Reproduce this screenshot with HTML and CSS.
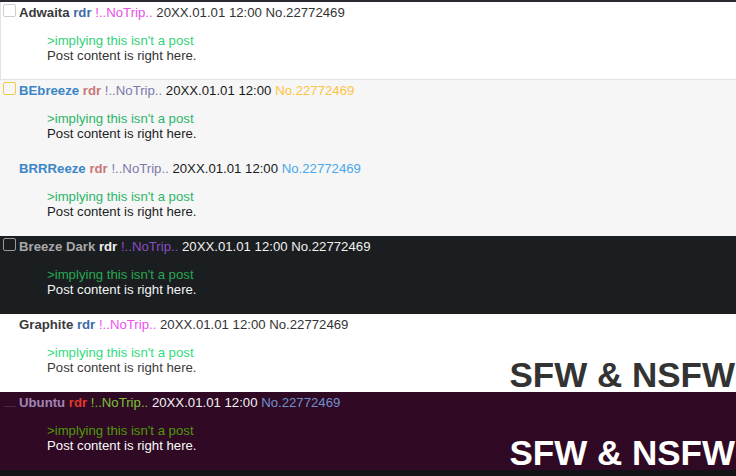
FILE: index.html
```html
<!DOCTYPE html>
<html>
<head>
<meta charset="utf-8">
<link rel="stylesheet" href="styles.css">
</head>
<body>
<div class="top-strip"></div>

<div class="theme adwaita">
  <div class="post">
    <div class="post-info"><span class="cb"></span><span class="name">Adwaita</span> <span class="tripname">rdr</span> <span class="trip">!..NoTrip..</span> <span class="date">20XX.01.01 12:00</span> <span class="num">No.22772469</span></div>
    <blockquote><span class="quote">&gt;implying this isn't a post</span><br>Post content is right here.</blockquote>
  </div>
</div>

<div class="theme bebreeze">
  <div class="post">
    <div class="post-info"><span class="cb"></span><span class="name">BEbreeze</span> <span class="tripname">rdr</span> <span class="trip">!..NoTrip..</span> <span class="date">20XX.01.01 12:00</span> <span class="num">No.22772469</span></div>
    <blockquote><span class="quote">&gt;implying this isn't a post</span><br>Post content is right here.</blockquote>
  </div>
</div>

<div class="theme brrreeze">
  <div class="post">
    <div class="post-info"><span class="cb hidden"></span><span class="name">BRRReeze</span> <span class="tripname">rdr</span> <span class="trip">!..NoTrip..</span> <span class="date">20XX.01.01 12:00</span> <span class="num">No.22772469</span></div>
    <blockquote><span class="quote">&gt;implying this isn't a post</span><br>Post content is right here.</blockquote>
  </div>
</div>

<div class="theme breezedark">
  <div class="post">
    <div class="post-info"><span class="cb"></span><span class="name">Breeze Dark</span> <span class="tripname">rdr</span> <span class="trip">!..NoTrip..</span> <span class="date">20XX.01.01 12:00</span> <span class="num">No.22772469</span></div>
    <blockquote><span class="quote">&gt;implying this isn't a post</span><br>Post content is right here.</blockquote>
  </div>
</div>

<div class="theme graphite">
  <div class="post">
    <div class="post-info"><span class="cb hidden"></span><span class="name">Graphite</span> <span class="tripname">rdr</span> <span class="trip">!..NoTrip..</span> <span class="date">20XX.01.01 12:00</span> <span class="num">No.22772469</span></div>
    <blockquote><span class="quote">&gt;implying this isn't a post</span><br>Post content is right here.</blockquote>
    <div class="badge">SFW &amp; NSFW</div>
  </div>
</div>

<div class="theme ubuntu">
  <div class="post">
    <div class="post-info"><span class="cb"></span><span class="name">Ubuntu</span> <span class="tripname">rdr</span> <span class="trip">!..NoTrip..</span> <span class="date">20XX.01.01 12:00</span> <span class="num">No.22772469</span></div>
    <blockquote><span class="quote">&gt;implying this isn't a post</span><br>Post content is right here.</blockquote>
    <div class="badge">SFW &amp; NSFW</div>
  </div>
</div>
</body>
</html>
```

FILE: styles.css
```css
html, body {
  margin: 0;
  padding: 0;
}
body {
  background: #101417;
  font-family: "Liberation Sans", Arial, sans-serif;
  font-size: 13.2px;
  line-height: 15px;
}
.top-strip {
  height: 2px;
  background: #2a2a33;
}
.post {
  position: relative;
  height: 78px;
  box-sizing: border-box;
  padding: 2px 0 0 0;
}
.post-info {
  padding-left: 3px;
  white-space: nowrap;
}
.cb {
  display: inline-block;
  width: 13px;
  height: 13px;
  box-sizing: border-box;
  border: 1px solid #cfcfcf;
  border-radius: 2px;
  background: #fff;
  margin-right: 3px;
  vertical-align: baseline;
}
.cb.hidden {
  visibility: hidden;
}
.name, .tripname {
  font-weight: bold;
}
blockquote {
  margin: 13px 0 0 47px;
}
.badge {
  position: absolute;
  right: 1px;
  bottom: 0;
  font-size: 35px;
  line-height: 35px;
  font-weight: bold;
  white-space: nowrap;
}

/* Adwaita */
.adwaita {
  background: #fff;
}
.adwaita .post {
  box-shadow: inset 1px 0 #e3e3e3, inset 0 -1px #e3e3e3;
}
.adwaita .name { color: #3a3a3a; }
.adwaita .tripname { color: #3d6aa8; }
.adwaita .trip { color: #e84fe8; }
.adwaita .date, .adwaita .num { color: #333; }
.adwaita .quote { color: #33d17a; }
.adwaita blockquote { color: #333; }
.adwaita .cb { border-color: #cdcdcd; }

/* BEbreeze */
.bebreeze, .brrreeze {
  background: #f6f6f6;
}
.bebreeze .name, .brrreeze .name { color: #3b86c6; }
.bebreeze .tripname, .brrreeze .tripname { color: #c87878; }
.bebreeze .trip, .brrreeze .trip { color: #7a7aaa; }
.bebreeze .date, .brrreeze .date { color: #181a1b; }
.bebreeze .num { color: #fdc443; }
.brrreeze .num { color: #4aa8e8; }
.bebreeze .quote, .brrreeze .quote { color: #2bb56a; }
.bebreeze blockquote, .brrreeze blockquote { color: #1a1c1d; }
.bebreeze .cb { border-color: #f5c84a; background: #f6f6f6; }

/* Breeze Dark */
.breezedark {
  background: #1b1e20;
}
.breezedark .name { color: #a8a8a8; }
.breezedark .tripname { color: #f0f0f0; }
.breezedark .trip { color: #8a4dc2; }
.breezedark .date, .breezedark .num { color: #f0f0f0; }
.breezedark .quote { color: #27a852; }
.breezedark blockquote { color: #f5f5f5; }
.breezedark .cb { border-color: #9a9a9a; background: #1b1e20; }

/* Graphite */
.graphite {
  background: #fff;
}
.graphite .name { color: #3a3a3a; }
.graphite .tripname { color: #3d6aa8; }
.graphite .trip { color: #f050f0; }
.graphite .date, .graphite .num { color: #333; }
.graphite .quote { color: #2fdc7e; }
.graphite blockquote { color: #3a3a3a; }
.graphite .badge { color: #333; }

/* Ubuntu */
.ubuntu {
  background: #300a24;
}
.ubuntu .name { color: #a284b4; }
.ubuntu .tripname { color: #df382c; }
.ubuntu .trip { color: #7cc03a; }
.ubuntu .date { color: #f2f2f2; }
.ubuntu .num { color: #7090cc; }
.ubuntu .quote { color: #4e9a06; }
.ubuntu blockquote { color: #fafafa; }
.ubuntu .cb { border-color: transparent transparent #4a2a40 transparent; background: transparent; border-radius: 0; }
.ubuntu .badge { color: #fff; }
```
